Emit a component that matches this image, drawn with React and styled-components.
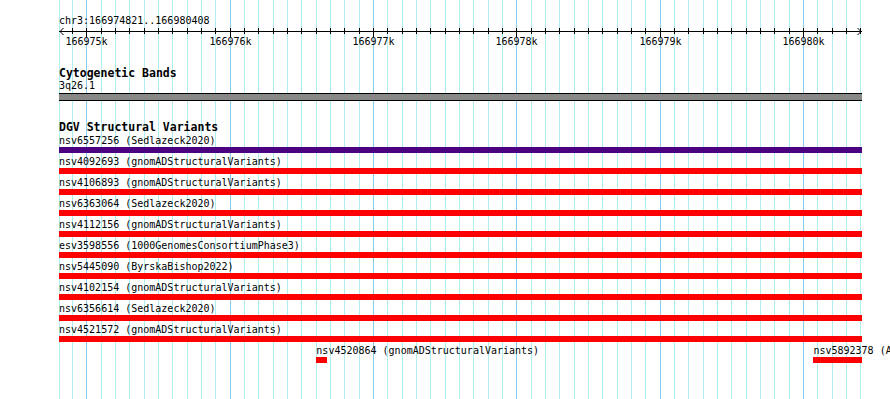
import React from 'react';
import styled, { createGlobalStyle } from 'styled-components';

const GlobalStyle = createGlobalStyle`
	html, body {
		margin: 0;
		padding: 0;
		background: #ffffff;
		overflow: hidden;
	}
	body {
		font-family: "DejaVu Sans Mono", "Liberation Mono", monospace;
		font-size: 10px;
		color: #000000;
	}
`;

// view geometry: 1 kb = 143.33px, 166975k sits 27.3px into the view
const ORIGIN_BP = 166975000;
const ORIGIN_PX = 27.3;
const PX_PER_BP = 0.143333;
const VIEW_WIDTH = 803;

const toPx = (bp) => ORIGIN_PX + (bp - ORIGIN_BP) * PX_PER_BP;
const clamp = (v) => Math.max(0, Math.min(VIEW_WIDTH, v));

const gridSteps = () => {
	const steps = [];
	for (let k = -2; k < 60; k++) {
		const x = Math.round(ORIGIN_PX + k * 14.3333);
		if (x >= 0 && x <= VIEW_WIDTH) steps.push({ k, x });
	}
	return steps;
};

const features = [
	[{ name: 'nsv6557256', source: 'Sedlazeck2020', start: 166970000, end: 166990000, color: '#4b0082' }],
	[{ name: 'nsv4092693', source: 'gnomADStructuralVariants', start: 166970000, end: 166990000 }],
	[{ name: 'nsv4106893', source: 'gnomADStructuralVariants', start: 166970000, end: 166990000 }],
	[{ name: 'nsv6363064', source: 'Sedlazeck2020', start: 166970000, end: 166990000 }],
	[{ name: 'nsv4112156', source: 'gnomADStructuralVariants', start: 166970000, end: 166990000 }],
	[{ name: 'esv3598556', source: '1000GenomesConsortiumPhase3', start: 166970000, end: 166990000 }],
	[{ name: 'nsv5445090', source: 'ByrskaBishop2022', start: 166970000, end: 166990000 }],
	[{ name: 'nsv4102154', source: 'gnomADStructuralVariants', start: 166970000, end: 166990000 }],
	[{ name: 'nsv6356614', source: 'Sedlazeck2020', start: 166970000, end: 166990000 }],
	[{ name: 'nsv4521572', source: 'gnomADStructuralVariants', start: 166970000, end: 166990000 }],
	[
		{ name: 'nsv4520864', source: 'gnomADStructuralVariants', start: 166976605, end: 166976680 },
		{ name: 'nsv5892378', source: 'ACMG', start: 166980073, end: 166990000 },
	],
];

const Canvas = styled.div`
	position: relative;
	margin-left: 59px;
	width: ${VIEW_WIDTH}px;
	height: 100vh;
`;

const Grid = styled.svg`
	position: absolute;
	top: 0;
	left: 0;
	width: 100%;
	height: 100%;
	pointer-events: none;
	z-index: 0;
`;

const Content = styled.div`
	position: relative;
	z-index: 1;
	padding-top: 15px;
`;

const Location = styled.div`
	height: 12px;
	line-height: 12px;
	white-space: nowrap;
`;

const Ruler = styled.svg`
	display: block;
	width: ${VIEW_WIDTH}px;
	height: 20px;
	overflow: visible;
	font-family: "DejaVu Sans Mono", "Liberation Mono", monospace;
	font-size: 10px;
`;

const TrackTitle = styled.div`
	margin-top: 20px;
	height: ${(p) => p.$height}px;
	line-height: 13px;
	font-size: 11.5px;
	font-weight: bold;
	white-space: nowrap;
`;

const BandLabel = styled.div`
	height: 12px;
	line-height: 12px;
`;

const Band = styled.div`
	margin-top: 1px;
	height: 6px;
	background: #888888;
	border-top: 1px solid #000000;
	border-bottom: 1px solid #000000;
`;

const Row = styled.div`
	position: relative;
	height: 21px;
`;

const Feature = styled.div`
	position: absolute;
	top: 0;
`;

const FeatureLabel = styled.div`
	height: 12px;
	line-height: 12px;
	white-space: nowrap;
`;

const FeatureBar = styled.div`
	height: 6px;
	background: ${(p) => p.$color};
`;

const GridLines = () => (
	<Grid>
		<line x1="0.5" y1="0" x2="0.5" y2="100%" stroke="#aeeef0" strokeWidth="1" />
		{gridSteps().map(({ k, x }) => (
			<line
				key={k}
				x1={x + 0.5}
				y1="0"
				x2={x + 0.5}
				y2="100%"
				stroke={k % 10 === 0 ? '#88ccee' : '#aeeef0'}
				strokeWidth="1"
			/>
		))}
	</Grid>
);

const Scale = () => (
	<Ruler>
		<line x1="0" y1="4.5" x2={VIEW_WIDTH} y2="4.5" stroke="#000" strokeWidth="1" />
		<path d="M4.5 1 L1 4.5 L4.5 8" fill="none" stroke="#000" strokeWidth="1" />
		<path d={`M${VIEW_WIDTH - 4.5} 1 L${VIEW_WIDTH - 1} 4.5 L${VIEW_WIDTH - 4.5} 8`} fill="none" stroke="#000" strokeWidth="1" />
		{gridSteps().map(({ k, x }) => (
			<line key={k} x1={x + 0.5} y1="1" x2={x + 0.5} y2={k % 10 === 0 ? 10 : 7} stroke="#000" strokeWidth="1" />
		))}
		{gridSteps()
			.filter(({ k }) => k % 10 === 0)
			.map(({ k, x }) => (
				<text key={k} x={x + 0.5} y="17.5" textAnchor="middle" fill="#000">
					{`${166975 + k / 10}k`}
				</text>
			))}
	</Ruler>
);

const FeatureRow = ({ items }) => (
	<Row>
		{items.map((f) => {
			const left = clamp(toPx(f.start));
			const right = clamp(toPx(f.end));
			return (
				<Feature key={f.name} style={{ left, width: right - left }}>
					<FeatureLabel>{`${f.name} (${f.source})`}</FeatureLabel>
					<FeatureBar $color={f.color || '#ff0000'} />
				</Feature>
			);
		})}
	</Row>
);

const App = () => (
	<>
		<GlobalStyle />
		<Canvas>
			<GridLines />
			<Content>
				<Location>chr3:166974821..166980408</Location>
				<Scale />
				<TrackTitle $height={13}>Cytogenetic Bands</TrackTitle>
				<BandLabel>3q26.1</BandLabel>
				<Band />
				<TrackTitle $height={14}>DGV Structural Variants</TrackTitle>
				{features.map((items, i) => (
					<FeatureRow key={i} items={items} />
				))}
			</Content>
		</Canvas>
	</>
);

export default App;
